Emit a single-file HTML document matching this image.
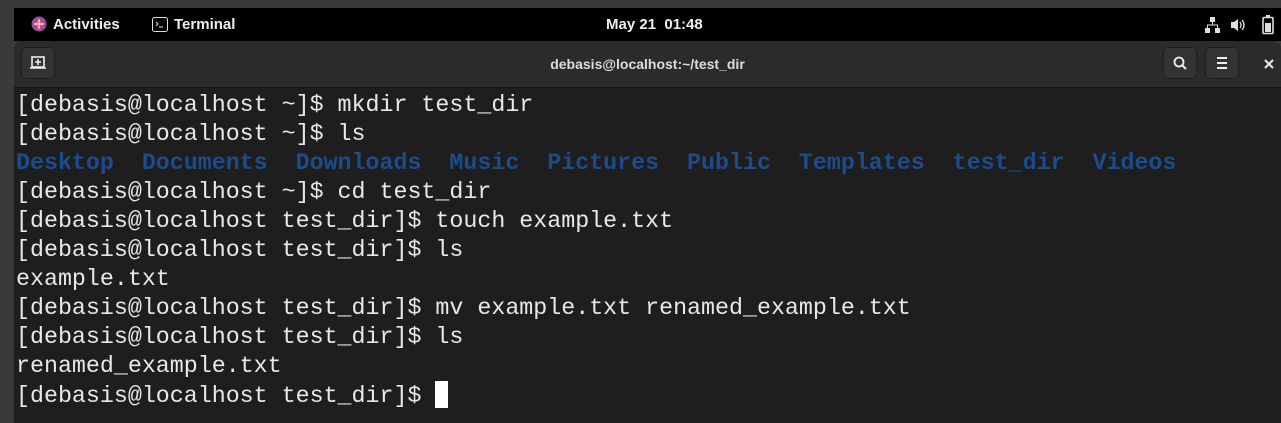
<!DOCTYPE html>
<html><head><style>
body{margin:0;width:1281px;height:423px;background:#3a3a3a;overflow:hidden;position:relative;font-family:"Liberation Sans",sans-serif}
#top{position:absolute;left:14px;top:8px;width:1267px;height:33px;background:#000;color:#eee;font-size:15px}
#top span{position:absolute;top:8px;font-weight:600}
#hb{position:absolute;left:14px;top:41px;width:1267px;height:46px;background:#2b2b2b;border-radius:8px 8px 0 0;border-bottom:1px solid #111;color:#ddd;font-size:14px}
.btn{position:absolute;top:6px;width:34px;height:32px;background:#333;border:1px solid #1e1e1e;border-radius:5px;box-sizing:border-box}
#term{position:absolute;left:14px;top:88px;width:1267px;height:335px;background:#1e1e1e;color:#e8e8e8;font-family:"Liberation Mono",monospace;font-size:23.3px;line-height:29px;white-space:pre;padding:3px 0 0 2px;box-sizing:border-box}
.b{color:#1d4c8c;font-weight:bold}
.cur{display:inline-block;width:13px;height:27px;background:#fff;vertical-align:-6px}
</style></head><body>
<div id="top">
<svg style="position:absolute;left:17px;top:8px" width="16" height="16"><circle cx="8" cy="8" r="7.5" fill="#9b4f96"/><circle cx="8" cy="8" r="3" fill="none" stroke="#f3c" stroke-width="1.5"/><path d="M8 3v10M3 8h10" stroke="#fd9" stroke-width="1.4"/></svg>
<span style="left:39px">Activities</span>
<svg style="position:absolute;left:138px;top:9px" width="16" height="15"><rect x=".5" y=".5" width="15" height="14" rx="2" fill="none" stroke="#ddd"/><path d="M4 5l2 2-2 2M7 10h4" stroke="#ddd" fill="none"/></svg>
<span style="left:160px">Terminal</span>
<span style="left:592px">May 21&nbsp; 01:48</span>
<svg style="position:absolute;left:1191px;top:9px" width="15" height="16" fill="#ddd"><rect x="5" y="0" width="5" height="5"/><rect x="0" y="11" width="5" height="5"/><rect x="10" y="11" width="5" height="5"/><path d="M7.5 5v3M2.5 11V8h10v3" stroke="#ddd" fill="none"/></svg>
<svg style="position:absolute;left:1216px;top:9px" width="16" height="16" fill="#ddd"><path d="M1 5h3l4-3v12l-4-3H1z"/><path d="M10 5q2 3 0 6M12 3q4 5 0 10" stroke="#ddd" fill="none" stroke-width="1.3"/></svg>
<svg style="position:absolute;left:1248px;top:7px" width="12" height="20"><rect x="4" y="0" width="4" height="3" fill="#ddd"/><rect x="1" y="2.5" width="10" height="16" rx="1" fill="none" stroke="#ddd" stroke-width="1.6"/><rect x="3" y="8" width="6" height="9" fill="#ddd"/></svg>
</div>
<div id="hb">
<div class="btn" style="left:7px"><svg width="32" height="30"><rect x="10" y="9" width="12" height="10" fill="none" stroke="#eee" stroke-width="1.6"/><path d="M8 20h16M16 11v6M13 14h6" stroke="#eee" stroke-width="1.6"/></svg></div>
<div style="position:absolute;left:0;width:1267px;top:15px;text-align:center;font-weight:600">debasis@localhost:~/test_dir</div>
<div class="btn" style="left:1149px"><svg width="32" height="30"><circle cx="15" cy="14" r="4.5" fill="none" stroke="#eee" stroke-width="1.8"/><path d="M18 17l4 4" stroke="#eee" stroke-width="2"/></svg></div>
<div class="btn" style="left:1191px"><svg width="32" height="30"><path d="M11 10h10M11 15h10M11 20h10" stroke="#eee" stroke-width="2"/></svg></div>
<svg style="position:absolute;left:1250px;top:18px" width="10" height="10"><path d="M1 1l8 8M9 1l-8 8" stroke="#eee" stroke-width="2"/></svg>
</div>
<div id="term">[debasis@localhost ~]$ mkdir test_dir
[debasis@localhost ~]$ ls
<span class="b">Desktop  Documents  Downloads  Music  Pictures  Public  Templates  test_dir  Videos</span>
[debasis@localhost ~]$ cd test_dir
[debasis@localhost test_dir]$ touch example.txt
[debasis@localhost test_dir]$ ls
example.txt
[debasis@localhost test_dir]$ mv example.txt renamed_example.txt
[debasis@localhost test_dir]$ ls
renamed_example.txt
[debasis@localhost test_dir]$ <span class="cur"></span></div>
</body></html>
